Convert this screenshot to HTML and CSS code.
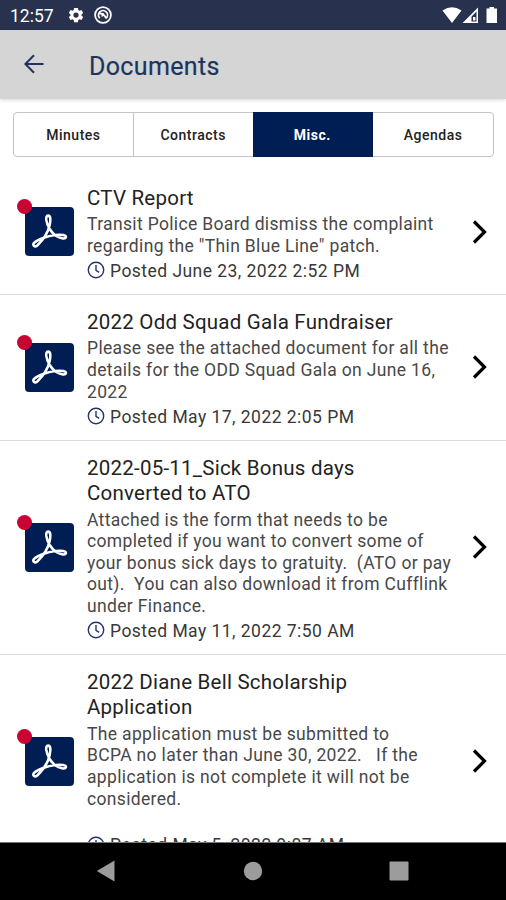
FILE: index.html
```html
<!DOCTYPE html>
<html lang="en">
<head>
<meta charset="utf-8">
<title>Documents</title>
<link rel="stylesheet" href="styles.css">
</head>
<body>
<svg class="defs" aria-hidden="true">
  <symbol id="pdf" viewBox="0 0 50 50">
    <path d="M23.500 8.800C26.400 8.800 26.300 13.500 25 19C23.500 26 18 34 12.500 39.300C9.800 41.500 7.300 39 9.300 36.600C13 33 23 29.600 31 28.600C37 27.800 42.300 28.600 41.800 30.800C41 33.500 35.500 31.800 31.500 29.300C26.500 26 22.500 19 21.700 13.200C21.400 10.500 22.100 8.800 23.500 8.800Z"/>
  </symbol>
  <symbol id="clock" viewBox="0 0 18 18"><circle cx="9" cy="9" r="7.7"/><path d="M9 4V9.3L12.2 11.3"/></symbol>
  <symbol id="chevron" viewBox="0 0 16 24"><path d="M2 1.5L12.5 12L2 22.5"/></symbol>
</svg>
<div class="screen">
  <div class="status">
    <span class="time">12:57</span>
    <svg class="gear" viewBox="0 0 24 24"><path fill-rule="evenodd" d="M19.4 13c.1-.6.1-1.400 0-2l2.200-1.700-2.300-4-2.600 1.100-1.700-1L14.600 2.500H9.400L9 5.400l-1.700 1-2.600-1.100-2.300 4L4.600 11v2l-2.200 1.700 2.300 4 2.600-1.100 1.700 1 .4 2.900h5.200l.4-2.900 1.700-1 2.600 1.100 2.300-4zM12 15.500a3.500 3.500 0 1 1 0-7 3.500 3.500 0 0 1 0 7z"/></svg>
    <svg class="ring" viewBox="0 0 18 18"><circle cx="9" cy="9" r="7.900"/><path d="M5.800 12.200A4.500 4.500 0 1 1 12.200 12.200M5.500 7.500L9 7.800L12.500 12.500M9 7.800L8 10.500"/></svg>
    <svg class="signals" viewBox="0 0 56 18">
      <path d="M.5 4.500Q10 -2 19.500 4.500L10 17Z"/>
      <path fill-rule="evenodd" d="M36 1.500V17H20.500ZM34.500 5.500L29.500 10.500V15.500H34.500ZM31 11H33.500V14.500H31Z"/>
      <path d="M47.500 1H52V2.500H55V17H44.500V2.500H47.500Z"/>
    </svg>
  </div>
  <header class="bar">
    <svg class="back" viewBox="0 0 20 20"><path d="M19.500 10H1.500M10 1.300L1.300 10L10 18.700"/></svg>
    <h1>Documents</h1>
  </header>
  <nav class="tabs">
    <span>Minutes</span><span>Contracts</span><span class="active">Misc.</span><span>Agendas</span>
  </nav>
  <main class="list">
    <article class="row">
      <div class="icon"><svg><use href="#pdf"/></svg></div>
      <div class="info">
        <h2>CTV Report</h2>
        <p>Transit Police Board dismiss the complaint<br>regarding the "Thin Blue Line" patch.</p>
        <div class="posted"><svg><use href="#clock"/></svg>Posted June 23, 2022 2:52 PM</div>
      </div>
      <svg class="chevron"><use href="#chevron"/></svg>
    </article>
    <article class="row">
      <div class="icon"><svg><use href="#pdf"/></svg></div>
      <div class="info">
        <h2>2022 Odd Squad Gala Fundraiser</h2>
        <p>Please see the attached document for all the<br>details for the ODD Squad Gala on June 16,<br>2022</p>
        <div class="posted"><svg><use href="#clock"/></svg>Posted May 17, 2022 2:05 PM</div>
      </div>
      <svg class="chevron"><use href="#chevron"/></svg>
    </article>
    <article class="row">
      <div class="icon"><svg><use href="#pdf"/></svg></div>
      <div class="info">
        <h2>2022-05-11_Sick Bonus days<br>Converted to ATO</h2>
        <p>Attached is the form that needs to be<br>completed if you want to convert some of<br>your bonus sick days to gratuity.&nbsp; (ATO or pay<br>out).&nbsp; You can also download it from Cufflink<br>under Finance.</p>
        <div class="posted"><svg><use href="#clock"/></svg>Posted May 11, 2022 7:50 AM</div>
      </div>
      <svg class="chevron"><use href="#chevron"/></svg>
    </article>
    <article class="row">
      <div class="icon"><svg><use href="#pdf"/></svg></div>
      <div class="info">
        <h2>2022 Diane Bell Scholarship<br>Application</h2>
        <p>The application must be submitted to<br>BCPA no later than June 30, 2022.&nbsp;&nbsp; If the<br>application is not complete it will not be<br>considered.<br>&nbsp;</p>
        <div class="posted"><svg><use href="#clock"/></svg>Posted May 5, 2022 9:07 AM</div>
      </div>
      <svg class="chevron"><use href="#chevron"/></svg>
    </article>
  </main>
  <footer class="nav">
    <svg viewBox="0 0 20 22"><path d="M18.500 .5V21.500L.8 11Z"/></svg>
    <svg viewBox="0 0 20 22"><circle cx="10" cy="11" r="9.200"/></svg>
    <svg viewBox="0 0 20 22"><rect x=".5" y="1.500" width="19" height="19" rx="1"/></svg>
  </footer>
</div>
</body>
</html>
```
FILE: styles.css
```css
* { box-sizing: border-box; }
body { margin: 0; font-family: Roboto, "Liberation Sans", sans-serif; background: #fff; color: #222; }
svg { display: block; flex: none; }
.defs { width: 0; height: 0; position: absolute; }
h1, h2, p { margin: 0; font-weight: 400; }
.screen { width: 506px; height: 900px; display: flex; flex-direction: column; overflow: hidden; }
.status { height: 30px; flex: none; background: #28314d; display: flex; align-items: center; padding: 0 8px 0 10px; color: #fff; }
.time { font-size: 17.500px; width: 57px; letter-spacing: 0; padding-top: 2px; }
.gear { width: 18px; height: 18px; fill: #fff; }
.ring { width: 18px; height: 18px; margin-left: 9px; fill: none; stroke: #fff; stroke-width: 1.800; }
.signals { width: 56px; height: 18px; margin-left: auto; fill: #fff; }
.bar { height: 69px; flex: none; background: #d5d5d5; box-shadow: 0 1px 4px rgba(0,0,0,.16); display: flex; align-items: center; padding-left: 24px; color: #1d355d; }
.back { width: 20px; height: 20px; margin-top: -1px; fill: none; stroke: #1d355d; stroke-width: 2; }
.bar h1 { font-size: 25px; margin-left: 45px; padding-top: 3px; letter-spacing: .35px; -webkit-text-stroke: .2px #1d355d; }
.tabs { margin: 13px 12px 0 13px; height: 45px; flex: none; display: grid; grid-template-columns: repeat(4, 1fr); border: 1px solid #c4c4c6; border-radius: 4px; }
.tabs span { display: flex; align-items: center; justify-content: center; font-size: 14px; font-weight: 500; letter-spacing: .5px; padding-top: 1px; border-right: 1px solid #c4c4c6; }
.tabs span:last-child { border: 0; }
.tabs .active { margin: -1px 0 -1px -1px; background: #001e54; color: #fff; font-weight: 700; border-color: #001e54; }
.list { flex: 1; min-height: 0; overflow: hidden; padding-top: 13.500px; }
.row { display: flex; align-items: center; padding: 15px 18px 10px 25px; border-bottom: 1px solid #dadada; }
.icon { width: 49px; height: 49px; margin-top: -6px; border-radius: 4px; background: #001e54; position: relative; }
.icon::before { content: ""; position: absolute; left: -8px; top: -8px; width: 15px; height: 15px; border-radius: 50%; background: #c90433; }
.icon svg { width: 49px; height: 49px; fill: none; stroke: #fff; stroke-width: 2.600; }
.info { flex: 1; margin-left: 13px; white-space: nowrap; }
h2 { font-size: 20.500px; line-height: 25px; letter-spacing: .23px; }
p { font-size: 17.500px; line-height: 21.600px; letter-spacing: .34px; color: #484848; margin-top: 3.500px; }
.posted { display: flex; align-items: center; gap: 5px; height: 26.800px; font-size: 17.500px; letter-spacing: .46px; color: #383838; }
.posted svg { width: 18px; height: 18px; margin-top: -1px; fill: none; stroke: #25336a; stroke-width: 1.400; }
.chevron { width: 16px; height: 24px; margin-top: -6px; fill: none; stroke: #000; stroke-width: 3.200; }
.nav { height: 58px; flex: none; background: #000; border-top: 1px solid #777; display: flex; justify-content: space-between; padding: 17px 97px 0 96px; }
.nav svg { width: 20px; height: 22px; fill: #9c9c9c; }
```
